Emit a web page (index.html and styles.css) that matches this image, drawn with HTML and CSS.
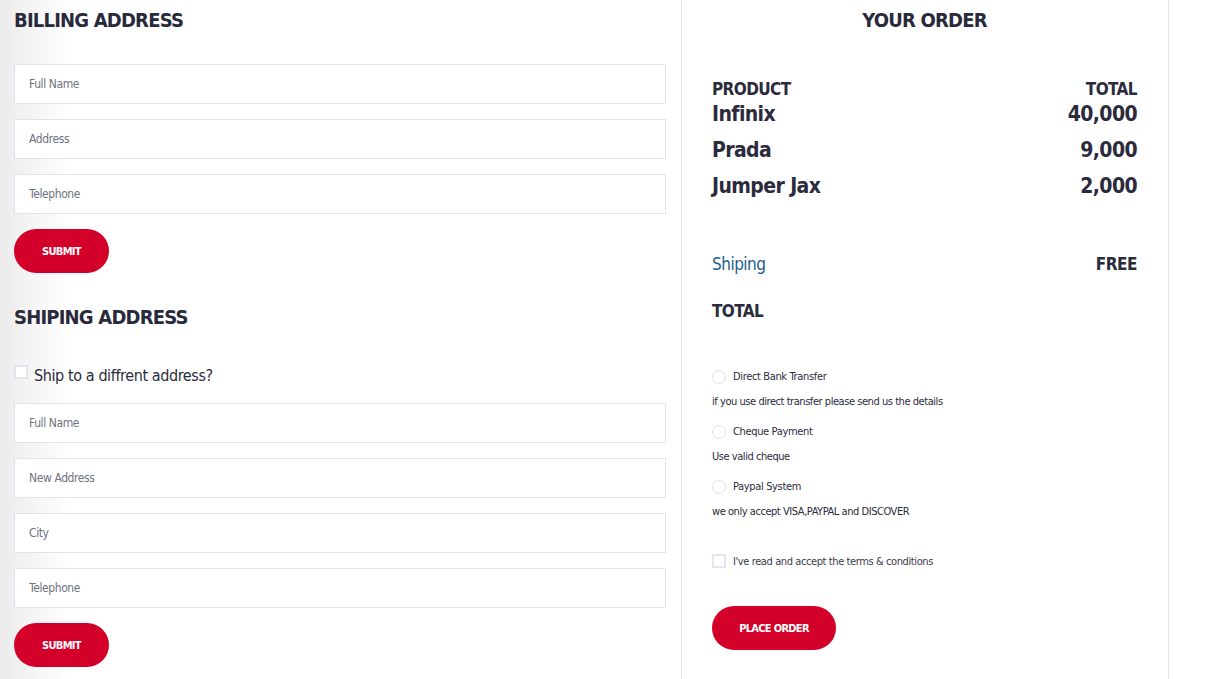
FILE: index.html
```html
<!DOCTYPE html>
<html lang="en">
<head>
<meta charset="utf-8">
<title>Checkout</title>
<link rel="stylesheet" href="styles.css">
</head>
<body>
<div class="page">
  <div class="left">
    <h2 class="heading">BILLING ADDRESS</h2>
    <form class="form">
      <input class="field" type="text" placeholder="Full Name">
      <input class="field" type="text" placeholder="Address">
      <input class="field" type="text" placeholder="Telephone">
      <button class="btn" type="button">SUBMIT</button>
    </form>
    <h2 class="heading heading-ship">SHIPING ADDRESS</h2>
    <label class="ship-check"><span class="box"></span><span>Ship to a diffrent address?</span></label>
    <form class="form">
      <input class="field" type="text" placeholder="Full Name">
      <input class="field" type="text" placeholder="New Address">
      <input class="field" type="text" placeholder="City">
      <input class="field" type="text" placeholder="Telephone">
      <button class="btn" type="button">SUBMIT</button>
    </form>
  </div>
  <div class="right">
    <h2 class="heading order-title">YOUR ORDER</h2>
    <div class="row head"><span>PRODUCT</span><span>TOTAL</span></div>
    <div class="row item"><span>Infinix</span><span>40,000</span></div>
    <div class="row item"><span>Prada</span><span>9,000</span></div>
    <div class="row item"><span>Jumper Jax</span><span>2,000</span></div>
    <div class="row ship"><span class="ship-label">Shiping</span><span class="free">FREE</span></div>
    <div class="row total"><span>TOTAL</span></div>
    <div class="payments">
      <label class="pay"><span class="radio"></span><span>Direct Bank Transfer</span></label>
      <p class="desc">if you use direct transfer please send us the details</p>
      <label class="pay"><span class="radio"></span><span>Cheque Payment</span></label>
      <p class="desc">Use valid cheque</p>
      <label class="pay"><span class="radio"></span><span>Paypal System</span></label>
      <p class="desc">we only accept VISA,PAYPAL and DISCOVER</p>
    </div>
    <label class="terms"><span class="box"></span><span>I've read and accept the terms &amp; conditions</span></label>
    <button class="btn btn-order" type="button">PLACE ORDER</button>
  </div>
</div>
</body>
</html>
```
FILE: styles.css
```css
* { box-sizing: border-box; }
html, body { margin: 0; padding: 0; }
body {
  font-family: "Liberation Sans Narrow", "DejaVu Sans Condensed", sans-serif;
  color: #2b2b3d;
  background: linear-gradient(to right, #ececec 0px, #ffffff 70px, #ffffff 100%);
  width: 1213px;
  height: 679px;
  overflow: hidden;
}
.page {
  display: flex;
  align-items: flex-start;
}
.left {
  width: 681px;
  padding: 6px 15px 0 14px;
}
.heading {
  margin: 0;
  font-size: 20px;
  font-weight: 700;
  line-height: 28px;
  color: #282a3c;
  letter-spacing: -0.8px;
}
.form {
  display: flex;
  flex-direction: column;
  gap: 15px;
  margin-top: 30px;
}
.field {
  width: 652px;
  height: 40px;
  border: 1px solid #e0e3eb;
  background: #fff;
  padding: 0 14px;
  font-family: inherit;
  font-size: 12px;
  letter-spacing: -0.4px;
  color: #555;
  outline: none;
}
.field::placeholder { color: #6f7280; }
.btn {
  width: 95px;
  height: 44px;
  border: none;
  border-radius: 22px;
  background: #d30029;
  color: #fff;
  font-family: inherit;
  font-weight: 700;
  font-size: 11px;
  letter-spacing: -0.7px;
  padding: 0;
}
.heading-ship { margin-top: 30px; }
.ship-check {
  display: flex;
  align-items: center;
  gap: 6px;
  margin-top: 32px;
  font-size: 16px;
  letter-spacing: -0.4px;
  color: #2b2b3d;
  height: 24px;
}
.ship-check .box { margin-top: -6px; }
.box {
  width: 14px;
  height: 14px;
  border: 2px solid #e3e6ee;
  background: #fff;
  flex: none;
}
.ship-check + .form { margin-top: 16px; }
.right {
  width: 488px;
  min-height: 679px;
  border-left: 1px solid #e3e6ee;
  border-right: 1px solid #e3e6ee;
  padding: 6px 31px 0 30px;
}
.order-title {
  text-align: center;
  margin-bottom: 44px;
}
.row {
  display: flex;
  justify-content: space-between;
  align-items: baseline;
}
.head {
  font-size: 17px;
  font-weight: 700;
  line-height: 22px;
  letter-spacing: -0.6px;
}
.item {
  font-size: 21px;
  font-weight: 700;
  line-height: 36px;
  letter-spacing: -0.6px;
}
.head + .item { line-height: 28px; margin-bottom: 4px; }
.ship {
  margin-top: 47px;
  font-size: 17px;
  line-height: 26px;
  letter-spacing: -0.5px;
}
.ship-label { color: #1d5e8e; }
.free { font-weight: 700; }
.total {
  margin-top: 21px;
  font-size: 17px;
  font-weight: 700;
  line-height: 26px;
  letter-spacing: -0.6px;
}
.payments { margin-top: 43px; }
.pay {
  display: flex;
  align-items: center;
  gap: 7px;
  font-size: 11px;
  letter-spacing: -0.35px;
  line-height: 20px;
}
.radio {
  width: 14px;
  height: 14px;
  border: 1px solid #dfe2ea;
  border-radius: 50%;
  flex: none;
}
.desc {
  margin: 6px 0 11px;
  font-size: 11px;
  letter-spacing: -0.45px;
  line-height: 18px;
}
.terms {
  display: flex;
  align-items: center;
  gap: 7px;
  font-size: 11px;
  letter-spacing: -0.4px;
  margin-top: 33px;
  color: #3a3a4a;
}
.btn-order {
  width: 124px;
  margin-top: 38px;
  display: block;
}
```
